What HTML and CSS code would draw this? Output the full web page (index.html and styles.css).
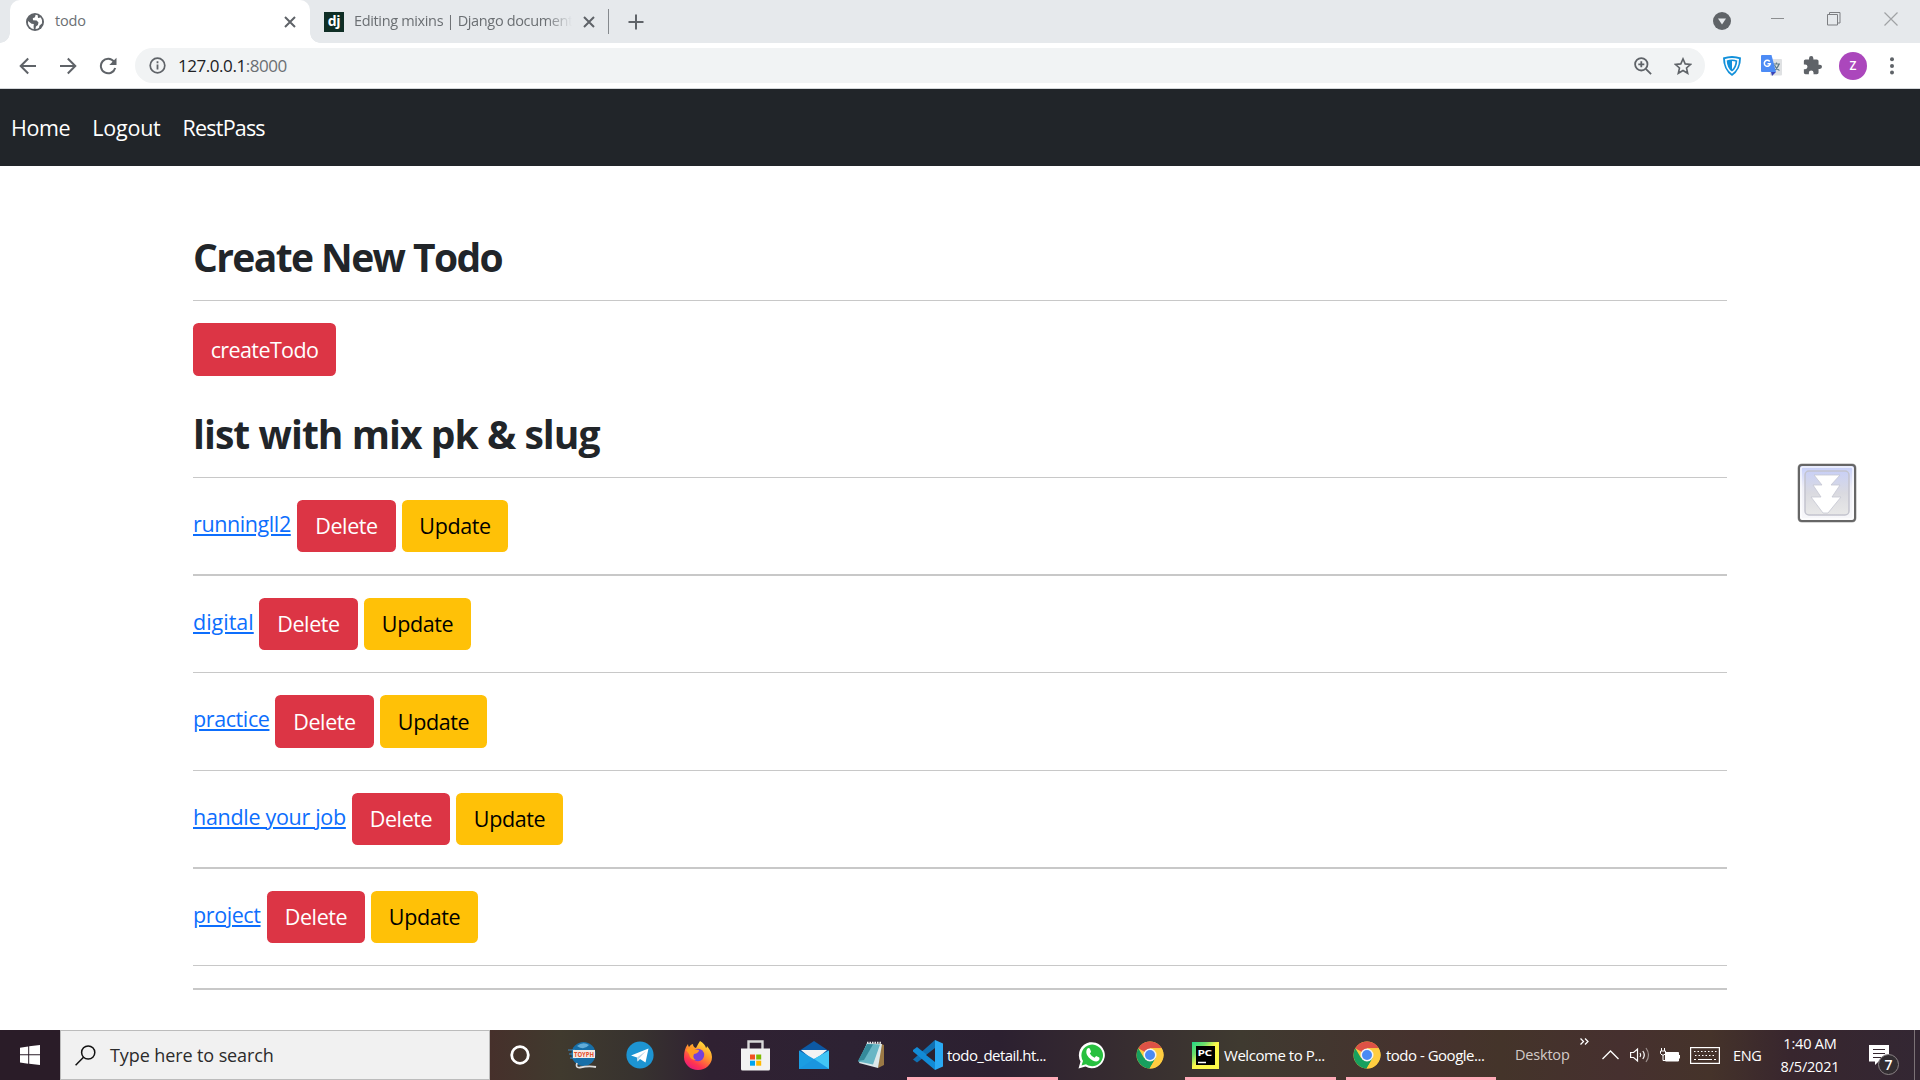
FILE: index.html
```
<!DOCTYPE html>
<html lang="en">
<head>
<meta charset="utf-8">
<title>todo</title>
<link rel="stylesheet" href="styles.css">
</head>
<body>
<svg class="defs" width="0" height="0">
  <symbol id="x" viewBox="0 0 12 12"><path d="M1 1l10 10M11 1L1 11" stroke="#5f6368" stroke-width="2"/></symbol>
  <symbol id="chrome" viewBox="0 0 28 28">
    <circle cx="14" cy="14" r="13.5" fill="#ffcd40"/>
    <path d="M14 14L2.3 7.3A13.5 13.5 0 0 1 25.7 7.3H14Z" fill="#de5246"/>
    <path d="M2.3 7.3A13.5 13.5 0 0 0 13.6 27.5L19.6 17.2 14 14 8.2 17.3Z" fill="#17a05e"/>
    <path d="M14 7.3h11.7A13.5 13.5 0 0 1 13.6 27.5L19.8 17.2Z" fill="#ffcd40"/>
    <circle cx="14" cy="14" r="6.5" fill="#f4f4f4"/><circle cx="14" cy="14" r="5" fill="#4a8af4"/>
  </symbol>
</svg>

<header class="browser">
  <div class="tabs">
    <div class="tab active">
      <svg width="18" height="18" viewBox="0 0 18 18"><circle cx="9" cy="9" r="9" fill="#5f6368"/><path d="M9.6 1.8L9 4.2 6.8 5.2 7 7.2l3.6.4 1.9 2-.6 2.4-2 1.5-.4 2.6A7.2 7.2 0 0 0 13 14.700l.4-2 2.700-2.500A7.200 7.200 0 0 0 14.800 4.600L12 5 11.700 2.300ZM2 8l3.600 2.800 2.200.3-.2 2.500.2 2.600A7.200 7.200 0 0 1 2 8Z" fill="#fff"/></svg>
      <span class="tab-title">todo</span>
      <svg class="close" width="12" height="12"><use href="#x"/></svg>
    </div>
    <div class="tab">
      <span class="dj">dj</span>
      <span class="tab-title faded">Editing mixins | Django document</span>
      <svg class="close" width="12" height="12"><use href="#x"/></svg>
    </div>
    <span class="tab-sep"></span>
    <svg class="new-tab" width="16" height="16" viewBox="0 0 16 16"><path d="M8 .5v15M.5 8h15" stroke="#5f6368" stroke-width="2"/></svg>
    <div class="window-controls">
      <svg width="18" height="18" viewBox="0 0 18 18"><circle cx="9" cy="9" r="9" fill="#606468"/><path d="M5 6.500h8L9 12.500Z" fill="#e6e9ec"/></svg>
      <svg class="min" width="13" height="14" viewBox="0 0 13 14"><path d="M0 6.500h13" stroke="#8c8e90"/></svg>
      <svg class="restore" width="14" height="14" viewBox="0 0 14 14" fill="none" stroke="#7d7f82"><path d="M.5 2.500h10v10.500H.5ZM2.500 2.500V.5h10.500v10.500h-2.500"/></svg>
      <svg class="shut" width="14" height="14" viewBox="0 0 14 14"><path d="M.5.500l13 13M13.500.500l-13 13" stroke="#a0a2a5" stroke-width="1.200"/></svg>
    </div>
  </div>
  <div class="toolbar">
    <svg class="back" width="18" height="18" viewBox="0 0 18 18" fill="none" stroke="#5f6368" stroke-width="2"><path d="M17 9H2M9.200 1.500L1.700 9l7.500 7.500"/></svg>
    <svg class="forward" width="18" height="18" viewBox="0 0 18 18" fill="none" stroke="#5f6368" stroke-width="2"><path d="M1 9h15M8.800 1.500L16.300 9l-7.500 7.500"/></svg>
    <svg class="reload" width="18" height="18" viewBox="0 0 18 18"><path d="M15 4.600A7.300 7.300 0 1 0 16.200 11" fill="none" stroke="#5f6368" stroke-width="2"/><path d="M17.500.800V8H10.300Z" fill="#5f6368"/></svg>
    <div class="omnibox">
      <svg width="17" height="17" viewBox="0 0 17 17"><circle cx="8.500" cy="8.500" r="7.300" fill="none" stroke="#5f6368" stroke-width="1.700"/><path d="M8.500 7.500v5M8.500 4.300v1.900" stroke="#5f6368" stroke-width="1.800"/></svg>
      <span class="url">127.0.0.1<i>:8000</i></span>
      <svg class="magnify" width="18" height="18" viewBox="0 0 18 18" fill="none" stroke="#5f6368" stroke-width="1.800"><circle cx="7.300" cy="7.300" r="6.200"/><path d="M11.800 11.800l5.300 5.300M4.300 7.300h6M7.300 4.300v6"/></svg>
      <svg width="18" height="18" viewBox="0 0 18 18" fill="none" stroke="#5f6368" stroke-width="1.600"><path d="M9 1.900l2.200 5 5.400.5-4.100 3.600 1.200 5.300L9 13.500l-4.700 2.800 1.200-5.300L1.400 7.400l5.400-.5Z"/></svg>
    </div>
    <svg class="shield" width="18" height="20" viewBox="0 0 18 20"><path d="M0 1.500Q9-1.500 18 1.500Q18 14 9 20Q0 14 0 1.500Z" fill="#1190da"/><path d="M2 3Q9 .800 16 3Q16 13 9 17.700Q2 13 2 3Z" fill="#fff"/><path d="M3.700 4.400Q9 2.800 14.300 4.400Q14 12 9 15.600Q4 12 3.700 4.400Z" fill="#1190da"/><path d="M9 5q2 0 3.500.5Q12 11 9 13.500Z" fill="#fff"/></svg>
    <svg class="translate" width="21" height="21" viewBox="0 0 21 21"><rect x="9" y="4" width="12" height="16.500" rx="1" fill="#dfe1e3"/><path d="M12 9h7M15.500 7.500V9M18 9q-1 4-5 6.500M13.500 10q1.500 4 5 5.500" fill="none" stroke="#607d8b" stroke-width="1.200"/><path d="M10 17h5l-4 4Z" fill="#3a45b8"/><path d="M1 0h9.500l4.500 17H1q-1 0-1-1V1q0-1 1-1Z" fill="#4c8bf5"/><path d="M8.700 6.500A3 3 0 1 0 9.300 8.700H6.500" fill="none" stroke="#fff" stroke-width="1.500"/></svg>
    <svg class="puzzle" width="19" height="19" viewBox="1 1 22 22"><path d="M20.500 11H19V7c0-1.100-.9-2-2-2h-4V3.500a2.500 2.500 0 0 0-5 0V5H4c-1.100 0-2 .9-2 2v3.800h1.500a2.700 2.700 0 0 1 0 5.400H2V20c0 1.100.9 2 2 2h3.800v-1.500a2.700 2.700 0 0 1 5.400 0V22H17c1.100 0 2-.9 2-2v-4h1.500a2.500 2.500 0 0 0 0-5z" fill="#5f6368"/></svg>
    <span class="avatar">Z</span>
    <svg class="dots" width="4" height="18" viewBox="0 0 4 18" fill="#5f6368"><circle cx="2" cy="2.300" r="2"/><circle cx="2" cy="9" r="2"/><circle cx="2" cy="15.500" r="2"/></svg>
  </div>
</header>

<nav class="navbar"><a>Home</a><a class="logout">Logout</a><a class="reset">RestPass</a></nav>

<main class="container">
  <h2 class="create-title">Create New Todo</h2>
  <hr>
  <a class="btn danger create">createTodo</a>
  <h2 class="list-title">list with mix pk &amp; slug</h2>
  <hr>
  <div class="todo"><a class="link running">runningll2</a><a class="btn danger">Delete</a><a class="btn warning first">Update</a></div>
  <hr class="thick">
  <div class="todo"><a class="link digital">digital</a><a class="btn danger">Delete</a><a class="btn warning">Update</a></div>
  <hr>
  <div class="todo tall"><a class="link practice">practice</a><a class="btn danger">Delete</a><a class="btn warning">Update</a></div>
  <hr>
  <div class="todo"><a class="link handle">handle your job</a><a class="btn danger slim">Delete</a><a class="btn warning">Update</a></div>
  <hr class="thick">
  <div class="todo"><a class="link project">project</a><a class="btn danger slim">Delete</a><a class="btn warning">Update</a></div>
  <hr>
  <hr class="thick">
</main>

<div class="scroll-widget">
  <svg width="60" height="60" viewBox="0 0 60 60">
    <defs>
      <linearGradient id="w1" x2="0" y2="1"><stop offset="0" stop-color="#c3ccfa"/><stop offset=".4" stop-color="#eeeef6"/><stop offset="1" stop-color="#f8f8fa"/></linearGradient>
      <linearGradient id="w2" x2="0" y2="1"><stop offset="0" stop-color="#c9d0f6"/><stop offset=".5" stop-color="#dadae0"/><stop offset="1" stop-color="#e8e8e8"/></linearGradient>
    </defs>
    <rect x=".5" y=".5" width="59" height="59" rx="4.500" fill="#b0b0b0"/>
    <rect x="2" y="2" width="56" height="56" rx="3" fill="url(#w1)" stroke="#666" stroke-width="2"/>
    <rect x="4" y="4" width="52" height="52" rx="2" fill="none" stroke="#fff" stroke-opacity=".8" stroke-width="1.500"/>
    <rect x="8" y="8" width="44" height="44" rx="4" fill="url(#w2)" stroke="#c3c4ce" stroke-width="1.500"/>
    <path d="M17 12h26l-9 10h9l-8 12h9L31 50h-5L14 34h10l-8-12h9Z" fill="#fff" stroke="#c5c6d2" stroke-width=".8"/>
  </svg>
</div>

<footer class="taskbar">
  <div class="start"><svg width="20" height="20" viewBox="0 0 20 20" fill="#fff"><path d="M0 2.800L8.200 1.500V9.300H0ZM9.200 1.300L20 0V9.300H9.200ZM0 10.300H8.200V18.700L0 17.500ZM9.200 10.300H20V20L9.200 18.800Z"/></svg></div>
  <div class="search"><svg width="21" height="21" viewBox="0 0 21 21" fill="none" stroke="#111" stroke-width="1.500"><circle cx="13.200" cy="7.500" r="6.600"/><path d="M8.500 12.200L.6 20.200"/></svg><span>Type here to search</span></div>
  <div class="slot cortana"><svg width="20" height="20" viewBox="0 0 20 20"><circle cx="10" cy="10" r="8.300" fill="none" stroke="#fff" stroke-width="2.800"/></svg></div>
  <div class="slot"><svg class="toyph" width="28" height="28" viewBox="0 0 28 28"><circle cx="15.500" cy="13" r="12" fill="#176fa8"/><path d="M9 5Q15 0 21 4Q16 10 9 5Z" fill="#62acd8"/><path d="M0 9h7M1 13h5M2 17h6" stroke="#3b8ac4" stroke-width="1.200"/><rect x="5" y="9" width="22" height="8" fill="#f3ece7"/><text x="6" y="15.500" font-size="6.500" font-weight="700" fill="#e5502c" textLength="20" lengthAdjust="spacingAndGlyphs">TOYPH</text><path d="M9 22q-2 5 3 4.500 9-2 16-.5" fill="none" stroke="#ddd" stroke-width="1.800"/></svg></div>
  <div class="slot"><svg width="28" height="28" viewBox="0 0 28 28"><circle cx="14" cy="14" r="13.600" fill="#1d94d2"/><path d="M5 14.500L22.500 7.500 19.500 21.500 14 18 11.500 20.500 11 16.500Z" fill="#fff"/><path d="M11 16.500L20 10l-7 7.500-1.500 3Z" fill="#b9d5e8"/></svg></div>
  <div class="slot"><svg width="30" height="30" viewBox="0 0 30 30"><defs><linearGradient id="fx" x1=".8" x2=".2" y2="1"><stop offset="0" stop-color="#ffec3d"/><stop offset=".4" stop-color="#ff9a2b"/><stop offset=".75" stop-color="#ff3650"/><stop offset="1" stop-color="#e31587"/></linearGradient></defs><path d="M17 1q5 3 6 7 1-.5 1-2 5 6 5 11a14 13 0 0 1-28 0Q1 9 5 4q0 2 1 3 2-3 4-3 0 3 3 4 2-4 4-7Z" fill="url(#fx)"/><circle cx="15" cy="15" r="6.200" fill="#7542d8"/><path d="M3 10q4-4 7-1l6 1q0 3-5 4-2 4 2 6-6 0-7-6Z" fill="#ff9b22"/></svg></div>
  <div class="slot"><svg class="store" width="29" height="31" viewBox="0 0 29 31"><path d="M7.500 9V1.500h14V9" fill="none" stroke="#d9d9d9" stroke-width="2.400"/><path d="M0 8.500h29V29q0 1.500-1.500 1.500h-26Q0 30.500 0 29Z" fill="#f2f2f2"/><path d="M9 14.500h5v5H9Z" fill="#f25022"/><path d="M15.200 14.500h5v5h-5Z" fill="#7fba00"/><path d="M9 20.700h5v5H9Z" fill="#00a4ef"/><path d="M15.200 20.700h5v5h-5Z" fill="#ffb900"/></svg></div>
  <div class="slot"><svg width="30" height="28" viewBox="0 0 30 28"><path d="M0 10L15 0 30 10V20H0Z" fill="#0c59a4"/><path d="M2 9h26L15 20Z" fill="#f3f3f3"/><path d="M0 9.500L15 18 30 9.500V28H0Z" fill="#1b9de2"/><path d="M15 18L30 9.500V28Z" fill="#42c5f5"/><path d="M15 18l15 10H0Z" fill="#1a91dd" opacity=".6"/></svg></div>
  <div class="slot"><svg class="notepad" width="28" height="28" viewBox="0 0 28 28"><path d="M22 2l5 2v20l-6 3Z" fill="#9b7945"/><path d="M10 2l15 1-4 24-19-5Z" fill="#dce9eb"/><path d="M10 2.500l13 1-7 20-15-3Z" fill="#68b6c5"/><path d="M10 3l6 .5L7 19l-6 1Z" fill="#358a9b"/><path d="M10 1.800h15" stroke="#e8e8e8" stroke-width="2" stroke-dasharray="1.500 1"/></svg></div>
  <div class="task code"><svg width="30" height="30" viewBox="0 0 30 30"><path d="M22 0l8 3.500v23L22 30Z" fill="#2aa9f3"/><path d="M0 19.500L22 0v9L4 22.500Z" fill="#1070b3"/><path d="M0 10l4-3L22 21v9L0 11.500Z" fill="#128bd6"/><path d="M22 8v14l-9-7Z" fill="#2b2230"/></svg><span>todo_detail.ht...</span></div>
  <div class="slot whatsapp"><svg width="28" height="28" viewBox="0 0 28 28"><path d="M.5 27.500L2.500 20.500A13 13 0 1 1 7.500 25.500Z" fill="#fff"/><path d="M3.500 24.500L5 20A10.800 10.800 0 1 1 8 23.200Z" fill="#27c03f"/><path d="M9 8q2-2 3 0l1 2.500q0 1-1.200 2 1.700 3 4.800 4.300l1.500-1.800 3.200 1.500q1 3-3 4-3.500 0-7.500-4T9 8Z" fill="#fff"/></svg></div>
  <div class="slot"><svg width="28" height="28"><use href="#chrome"/></svg></div>
  <div class="task pycharm"><svg width="27" height="27" viewBox="0 0 27 27"><defs><linearGradient id="pc" x2=".6" y2=".6"><stop offset="0" stop-color="#21d789"/><stop offset=".45" stop-color="#6fe06b"/><stop offset=".8" stop-color="#fcf84a"/></linearGradient></defs><rect width="27" height="27" fill="url(#pc)"/><rect x="4" y="4" width="19" height="19" fill="#000"/><text x="5.500" y="13.700" font-size="9.500" font-weight="700" fill="#fff" textLength="14" lengthAdjust="spacingAndGlyphs">PC</text><path d="M6 20.500h8" stroke="#fff" stroke-width="1.500"/></svg><span>Welcome to P...</span></div>
  <div class="task google"><svg width="28" height="28"><use href="#chrome"/></svg><span>todo - Google...</span></div>
  <div class="tray">
    <span class="desktop">Desktop</span>
    <svg class="more" width="9" height="7" viewBox="0 0 9 7" fill="none" stroke="#fff" stroke-width="1.300"><path d="M.5.500l3 3-3 3M5 .500l3 3-3 3"/></svg>
    <svg class="chevron" width="17" height="10" viewBox="0 0 17 10" fill="none" stroke="#fff" stroke-width="1.300"><path d="M.5 9l8-8 8 8"/></svg>
    <svg class="speaker" width="20" height="18" viewBox="0 0 20 18" fill="none" stroke="#fff" stroke-width="1.200"><path d="M.6 6.500h3L7.500 3v12L3.600 11.500h-3ZM10 7q1.500 2 0 4M12.800 5q3 4 0 8"/><path d="M16 2q5 7 0 14" stroke="#9b8f8c"/></svg>
    <svg class="battery" width="20" height="15" viewBox="0 0 20 15"><path d="M5.500 4.500h13v8.500h-13Z" fill="#fff" stroke="#fff"/><path d="M19.500 7v3.500" stroke="#fff"/><path d="M1.500 0v3M4.500 0v3M.5 3h5v2.500l-1.500 1.500H2L.5 5.500ZM3 7v5.500h3" fill="none" stroke="#fff"/></svg>
    <svg class="keyboard" width="30" height="17" viewBox="0 0 30 17" fill="none" stroke="#fff" stroke-width="1.200"><rect x=".6" y=".6" width="28.800" height="15.800"/><path d="M4 4.500h23M5 8.500h21" stroke-dasharray="1.500 2"/><path d="M4 12.500h2M8 12.500h14M24 12.500h2"/></svg>
    <span class="lang">ENG</span>
    <div class="clock"><span>1:40 AM</span><span>8/5/2021</span></div>
    <div class="notice"><svg width="20" height="20" viewBox="0 0 20 20"><path d="M0 0h20v16.500H9.500L6 20v-3.500H0Z" fill="#fff"/><path d="M4 4.500h12M4 8.500h12M4 12.500h8" stroke="#35262f" stroke-width="1.200"/></svg><b>7</b></div>
    <span class="show-desktop"></span>
  </div>
</footer>
</body>
</html>
```
FILE: styles.css
```
* { box-sizing: border-box; }
body {
  margin: 0;
  width: 1920px;
  height: 1080px;
  overflow: hidden;
  display: flex;
  flex-direction: column;
  background: #fff;
  color: #212529;
  font-family: "Open Sans", "Noto Sans", sans-serif;
}
svg { display: block; flex: none; }
span, a { white-space: nowrap; }
.defs { position: absolute; }

/* browser frame */
.browser { height: 89px; flex: none; border-bottom: 1px solid #d4d7da; }
.tabs { height: 43px; background: #e6e9ec; display: flex; align-items: center; padding-left: 10px; }
.tab { width: 299px; height: 43px; display: flex; align-items: center; position: relative; color: #6b6f73; font-size: 14.5px; letter-spacing: -0.2px; }
.tab.active { width: 300px; background: #fff; border-radius: 10px 10px 0 0; padding-left: 16px; }
.tab.active::before, .tab.active::after { content: ""; position: absolute; bottom: 0; width: 10px; height: 10px; }
.tab.active::before { left: -10px; background: radial-gradient(circle at 0 0, #e6e9ec 9.5px, #fff 10px); }
.tab.active::after { right: -10px; background: radial-gradient(circle at 100% 0, #e6e9ec 9.5px, #fff 10px); }
.tab .tab-title { margin-left: 11px; padding-bottom: 2px; }
.tab .close { margin-left: auto; margin-right: 14px; }
.tab:not(.active) { padding-left: 14px; }
.tab:not(.active) .close { margin-right: 14px; }
.dj { width: 20px; height: 20px; background: #0f2e25; color: #fff; font-size: 14px; font-weight: 700; line-height: 18px; text-align: center; }
.tab .faded { margin-left: 10px; width: 218px; overflow: hidden; letter-spacing: -0.35px; mask-image: linear-gradient(90deg, #000 88%, transparent); }
.tab-sep { width: 1px; height: 25px; background: #85898d; margin-left: -1px; }
.new-tab { margin-left: 19px; }
.window-controls { margin-left: auto; display: flex; height: 43px; padding-right: 22px; padding-top: 12px; }
.window-controls .min { margin-left: 40px; }
.window-controls .restore { margin-left: 43px; }
.window-controls .shut { margin-left: 43px; }
.toolbar { height: 45px; display: flex; align-items: center; padding: 0 26px 0 18px; }
.back { margin-left: 1px; }
.forward { margin-left: 22px; }
.reload { margin-left: 22px; }
.omnibox { margin-left: 18px; width: 1570px; height: 35px; border-radius: 18px; background: #f1f3f4; display: flex; align-items: center; padding: 0 13px 0 14px; }
.url { margin-left: 12px; color: #202124; font-size: 17px; letter-spacing: -0.45px; }
.url i { color: #6b6f73; font-style: normal; }
.magnify { margin-left: auto; margin-right: 22px; }
.shield { margin-left: 18px; }
.translate { margin-left: 20px; }
.puzzle { margin-left: 21px; }
.avatar { margin-left: 17px; width: 28px; height: 28px; border-radius: 50%; background: #ab47bc; color: #fff; font-size: 12px; font-weight: 600; line-height: 28px; text-align: center; }
.dots { margin-left: 23px; }

/* page */
.navbar { height: 77px; flex: none; background: #212529; display: flex; align-items: center; padding: 0 11px 1px; color: #fff; font-size: 21.5px; letter-spacing: -0.4px; }
.logout { margin-left: 22px; letter-spacing: -0.2px; }
.reset { margin-left: 22px; letter-spacing: -0.8px; }
.container { flex: none; width: 1534px; height: 864px; margin-left: 193px; padding-top: 68px; display: flex; flex-direction: column; align-items: flex-start; gap: 22px; }
.container hr { width: 100%; height: 1px; flex: none; margin: 0; border: 0; background: #c8c8c8; }
.container hr.thick { height: 2px; }
h2 { margin: 0; height: 44px; font-size: 39px; line-height: 46px; font-weight: 700; letter-spacing: -0.95px; white-space: nowrap; }
.create-title { letter-spacing: -1.6px; }
.list-title { margin-top: 13px; }
.btn { height: 100%; width: 99px; border-radius: 5.5px; display: flex; align-items: center; justify-content: center; padding-bottom: 1px; font-size: 21.5px; letter-spacing: -0.4px; }
.danger { background: #dc3545; color: #fff; }
.slim { width: 98px; }
.warning { background: #ffc107; color: #000; width: 107px; }
.first { width: 106px; }
.create { width: 143px; height: 53px; flex: none; letter-spacing: -0.6px; }
.todo { height: 52px; flex: none; display: flex; align-items: center; gap: 6px; }
.todo.tall { height: 53px; }
.link { color: #0d6efd; font-size: 21.5px; letter-spacing: -0.4px; text-decoration: underline; text-decoration-thickness: 2px; text-underline-offset: 2px; padding-bottom: 6px; }
.running { width: 98px; }
.digital { width: 60px; letter-spacing: 0; }
.practice { width: 76px; }
.handle { width: 153px; letter-spacing: -0.3px; }
.project { width: 68px; }
.scroll-widget { position: absolute; left: 1797px; top: 463px; }

/* taskbar */
.taskbar { height: 50px; flex: none; display: flex; color: #fff; font-size: 15px; background: linear-gradient(90deg, #2a1c28 0, #2a1c28 60px, #46302b 490px, #403a2e 560px, #37322f 640px, #302132 710px, #2d2233 850px, #2c2030 1000px, #352a30 1100px, #3f3a30 1240px, #46322e 1420px, #44342a 1500px, #46302f 1620px, #45332a 1710px, #38262e 1790px, #332733 1920px); }
.start { width: 60px; display: flex; align-items: center; justify-content: center; }
.search { width: 430px; background: #f1f1f1; border: 1px solid #bcbcbc; display: flex; align-items: center; padding-left: 14px; gap: 14px; color: #2b2b2b; font-size: 18px; letter-spacing: -0.1px; }
.slot { width: 58px; flex: none; display: flex; align-items: center; justify-content: center; }
.cortana { width: 60px; margin-right: 3px; }
.toyph { overflow: visible; }
.store, .notepad { margin-right: 2px; }
.task { width: 151px; flex: none; display: flex; align-items: center; gap: 5px; padding: 3px 0 0 6px; border-bottom: 3px solid #ffabb8; letter-spacing: -0.5px; font-size: 15px; }
.task.code { margin-left: 6px; gap: 4px; letter-spacing: -0.55px; }
.whatsapp { margin-left: 5px; }
.task.pycharm { margin-left: 6px; padding-left: 7px; letter-spacing: -0.45px; }
.task.google { margin-left: 10px; width: 150px; padding-left: 7px; }
.tray { flex: 1; display: flex; align-items: center; }
.desktop { margin-left: 19px; width: 58px; color: #d3cbc8; font-size: 14.5px; letter-spacing: -0.2px; padding-bottom: 1px; }
.more { margin: 0 0 27px 7px; }
.chevron { margin-left: 13px; }
.speaker { margin-left: 11px; }
.battery { margin-left: 10px; }
.keyboard { margin-left: 10px; }
.lang { margin-left: 13px; width: 31px; font-size: 14.5px; letter-spacing: -0.4px; }
.clock { width: 64px; margin-left: 14px; display: flex; flex-direction: column; align-items: center; line-height: 23px; font-size: 14.5px; letter-spacing: -0.2px; }
.notice { margin-left: 27px; width: 31px; height: 20px; position: relative; }
.notice b { position: absolute; left: 9px; top: 9px; width: 21px; height: 21px; border: 1px solid #8a8385; border-radius: 50%; background: #322d31; font-size: 14px; line-height: 19px; text-align: center; font-weight: 600; }
.show-desktop { width: 1px; height: 50px; background: #7b7276; margin-left: 14px; }
```
